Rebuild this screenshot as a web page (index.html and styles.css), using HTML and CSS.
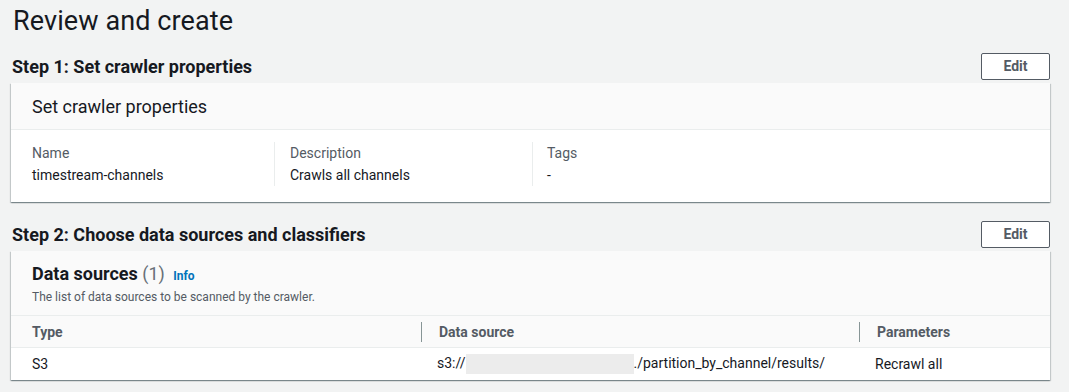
FILE: index.html
```html
<!DOCTYPE html>
<html lang="en">
<head>
    <meta charset="UTF-8">
    <meta name="viewport" content="width=device-width, initial-scale=1.0">
    <title>Review and create</title>
    <link rel="stylesheet" href="styles.css">
</head>
<body>
    <div class="page">
        <h1 class="page-title">Review and create</h1>

        <div class="step-header">
            <h2>Step 1: Set crawler properties</h2>
            <button class="edit-button">Edit</button>
        </div>
        <div class="card">
            <div class="card-header">
                <h3>Set crawler properties</h3>
            </div>
            <div class="card-body">
                <div class="props">
                    <div class="prop">
                        <div class="prop-label">Name</div>
                        <div class="prop-value">timestream-channels</div>
                    </div>
                    <div class="prop">
                        <div class="prop-label">Description</div>
                        <div class="prop-value">Crawls all channels</div>
                    </div>
                    <div class="prop">
                        <div class="prop-label">Tags</div>
                        <div class="prop-value">-</div>
                    </div>
                </div>
            </div>
        </div>

        <div class="step-header">
            <h2>Step 2: Choose data sources and classifiers</h2>
            <button class="edit-button">Edit</button>
        </div>
        <div class="card">
            <div class="card-header table-header">
                <h3><strong>Data sources</strong> <span class="count">(1)</span> <a href="#" class="info-link">Info</a></h3>
                <p class="card-desc">The list of data sources to be scanned by the crawler.</p>
            </div>
            <table class="sources">
                <thead>
                    <tr>
                        <th class="col-type">Type</th>
                        <th class="col-source"><span class="th-inner">Data source</span></th>
                        <th class="col-params"><span class="th-inner">Parameters</span></th>
                    </tr>
                </thead>
                <tbody>
                    <tr>
                        <td class="cell-type">S3</td>
                        <td class="cell-source">s3://<span class="redacted"></span>./partition_by_channel/results/</td>
                        <td class="cell-params">Recrawl all</td>
                    </tr>
                </tbody>
            </table>
        </div>
    </div>
</body>
</html>
```

FILE: styles.css
```css
body {
    font-family: Roboto, "Noto Sans", sans-serif;
    background-color: #f2f3f3;
    color: #16191f;
    margin: 0;
    font-size: 14px;
}
.page {
    padding: 0 19px 0 11px;
}
.page-title {
    font-size: 27px;
    font-weight: 400;
    line-height: 36px;
    margin: 3px 0 13px 2px;
    letter-spacing: 0.1px;
}
.step-header {
    display: flex;
    justify-content: space-between;
    align-items: center;
    height: 28px;
    margin-bottom: 3px;
}
.step-header h2 {
    font-size: 18px;
    font-weight: 700;
    margin: 0 0 0 1px;
}
.edit-button {
    width: 69px;
    height: 27px;
    background: #fff;
    border: 1px solid #545b64;
    border-radius: 2px;
    color: #545b64;
    font-family: inherit;
    font-size: 14px;
    font-weight: 700;
    padding: 0;
}
.card {
    background: #fff;
    box-shadow: 0 1px 1px 0 rgba(0, 28, 36, 0.3), 1px 1px 1px 0 rgba(0, 28, 36, 0.15), -1px 1px 1px 0 rgba(0, 28, 36, 0.15);
    margin-bottom: 18px;
}
.card-header {
    background: #fafafa;
    border-bottom: 1px solid #eaeded;
    padding: 12px 20px 11px 21px;
}
.card-header h3 {
    font-size: 18px;
    font-weight: 400;
    line-height: 23px;
    margin: 0;
}
.table-header {
    padding: 12px 20px 10px 21px;
}
.table-header h3 {
    line-height: 22px;
}
.card-header h3 strong {
    font-weight: 700;
}
.card-header h3 .count {
    color: #687078;
}
.info-link {
    color: #0073bb;
    font-size: 12px;
    font-weight: 700;
    text-decoration: none;
    margin-left: 4px;
}
.card-desc {
    margin: 2px 0 0;
    font-size: 12px;
    line-height: 16px;
    color: #545b64;
}
.card-body {
    padding: 12px 20px 16px 21px;
}
.props {
    display: grid;
    grid-template-columns: 242px 258px 1fr;
}
.prop {
    line-height: 22px;
}
.prop + .prop {
    border-left: 1px solid #eaeded;
    padding-left: 15px;
}
.prop:last-child {
    padding-left: 14px;
}
.prop-label {
    color: #545b64;
}
.sources {
    width: 100%;
    border-collapse: collapse;
    table-layout: fixed;
}
.sources th {
    background: #fafafa;
    color: #545b64;
    font-weight: 700;
    text-align: left;
    height: 31px;
    padding: 0;
    border-bottom: 1px solid #eaeded;
}
.sources td {
    height: 32px;
    padding: 0;
    white-space: nowrap;
}
.col-type {
    width: 389px;
    padding-left: 21px !important;
}
.col-source {
    width: 438px;
}
.th-inner {
    display: block;
    border-left: 1px solid #879596;
    padding-left: 17px;
    line-height: 20px;
}
.cell-type {
    padding-left: 21px !important;
}
.cell-source,
.cell-params {
    padding-left: 16px !important;
}
.redacted {
    display: inline-block;
    width: 168px;
    height: 20px;
    background: #ececec;
    vertical-align: middle;
}
```
